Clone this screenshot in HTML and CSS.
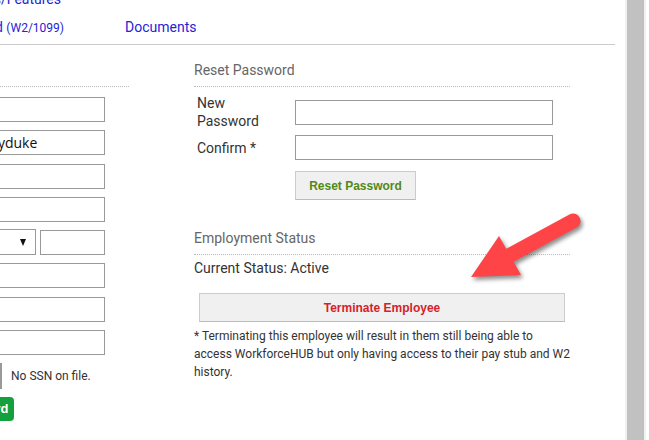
FILE: index.html
```html
<!DOCTYPE html>
<html lang="en">
<head>
    <meta charset="UTF-8">
    <meta name="viewport" content="width=device-width, initial-scale=1.0">
    <title>Employee Details</title>
    <link rel="stylesheet" href="styles.css">
</head>
<body>
    <div class="page">
        <div class="nav">
            <div class="nav-row nav-row-top">
                <a class="nav-link nav-first nav-features" href="#">Benefits/Features</a>
            </div>
            <div class="nav-row">
                <a class="nav-link nav-first" href="#">Year End <small>(W2/1099)</small></a>
                <a class="nav-link nav-docs" href="#">Documents</a>
            </div>
        </div>

        <div class="columns">
            <div class="col-left">
                <div class="section-title">Employee Info</div>
                <div class="info-rows">
                    <div class="info-row"><label>First Name</label><input type="text"></div>
                    <div class="info-row"><label>Username</label><input type="text" class="username" value="jmoodyduke"></div>
                    <div class="info-row"><label>Last Name</label><input type="text"></div>
                    <div class="info-row"><label>Address</label><input type="text"></div>
                    <div class="info-row">
                        <label>State / Zip</label>
                        <div class="field-split">
                            <div class="select-box"><span class="select-caret"></span></div>
                            <input type="text" class="zip">
                        </div>
                    </div>
                    <div class="info-row"><label>Phone</label><input type="text"></div>
                    <div class="info-row"><label>Email</label><input type="text"></div>
                    <div class="info-row"><label>Birth Date</label><input type="text"></div>
                    <div class="info-row">
                        <label>SSN</label>
                        <div class="ssn">
                            <div class="ssn-box"></div>
                            <span class="ssn-text">No SSN on file.</span>
                        </div>
                    </div>
                </div>
                <div class="save-row">
                    <button class="btn-save">Save Record</button>
                </div>
            </div>

            <div class="col-right">
                <div class="section-title">Reset Password</div>
                <div class="pw-form">
                    <label class="pw-label">New Password</label>
                    <input type="password">
                    <label class="pw-label">Confirm *</label>
                    <input type="password">
                </div>
                <button class="btn-grey btn-reset">Reset Password</button>

                <div class="section-title section-status">Employment Status</div>
                <div class="status">Current Status: Active</div>
                <button class="btn-grey btn-terminate">Terminate Employee</button>
                <p class="note">* Terminating this employee will result in them still being able to<br>access WorkforceHUB but only having access to their pay stub and W2 history.</p>
            </div>
        </div>
    </div>

    <!-- callout arrow drawn over the page -->
    <svg class="arrow" width="649" height="440" viewBox="0 0 649 440">
        <g class="arrow-shape">
            <line x1="573" y1="221" x2="503" y2="259" stroke="#ff4447" stroke-width="15" stroke-linecap="round"/>
            <polygon points="499,236 471,277 521,275" fill="#ff4447"/>
        </g>
    </svg>

    <div class="scrollbar"><div class="scrollbar-thumb"></div></div>
</body>
</html>
```

FILE: styles.css
```css
body {
    font-family: 'Roboto', 'Liberation Sans', sans-serif;
    font-size: 14px;
    color: #333;
    margin: 0;
    overflow: hidden;
    background: #fff;
    position: relative;
    height: 440px;
}

.page {
    width: 615px;
}

/* top navigation */
.nav {
    border-bottom: 1px solid #ccc;
    padding-bottom: 7px;
}

.nav-row {
    display: flex;
    line-height: 18px;
    margin-top: 10px;
    white-space: nowrap;
}

.nav-row-top {
    margin-top: -10px;
}

.nav-link {
    color: #2424d6;
    text-decoration: none;
}

.nav-first {
    width: 264px;
    margin-left: -200px;
    text-align: right;
}

.nav-features {
    padding-right: 3px;
    box-sizing: border-box;
}

.nav-link small {
    font-size: 12px;
}

.nav-docs {
    margin-left: 61px;
}

/* columns */
.columns {
    display: flex;
    margin-left: -131px;
}

.col-left {
    width: 260px;
}

.col-right {
    width: 376px;
    margin-left: 65px;
}

.section-title {
    margin-top: 15px;
    line-height: 20px;
    padding-bottom: 6px;
    border-bottom: 1px dotted #bbb;
    color: #666;
}

input {
    height: 25px;
    box-sizing: border-box;
    border: 1px solid #999;
    padding: 2px 4px;
    font-family: 'Open Sans', 'DejaVu Sans', sans-serif;
    font-size: 14px;
    color: #111;
    margin: 0;
    background: #fff;
}

/* left column rows */
.info-rows {
    margin-top: 10px;
}

.info-row {
    display: grid;
    grid-template-columns: 86px 150px;
    height: 25px;
    margin-bottom: 8.3px;
    align-items: center;
}

.info-row label {
    color: #333;
}

.info-row input {
    width: 150px;
}

.info-row .username {
    padding-left: 0;
}

.field-split {
    display: flex;
    gap: 4px;
}

.select-box {
    flex: 1;
    height: 26px;
    margin-top: -1px;
    box-sizing: border-box;
    border: 1px solid #999;
    display: flex;
    align-items: center;
    justify-content: flex-end;
    padding-right: 9px;
}

.select-caret {
    width: 0;
    height: 0;
    border-left: 3.5px solid transparent;
    border-right: 3.5px solid transparent;
    border-top: 7px solid #111;
}

.field-split .zip {
    width: 65px;
}

.ssn {
    display: flex;
    align-items: center;
}

.ssn-box {
    width: 47px;
    height: 26px;
    box-sizing: border-box;
    border: 1px solid #999;
    border-right-width: 2px;
    background: #fafafa;
}

.ssn-text {
    margin-left: 9px;
    font-size: 12px;
}

.save-row {
    display: flex;
    justify-content: flex-end;
    width: 144.5px;
    margin-top: 8px;
}

.btn-save {
    height: 24px;
    padding: 0 5px 0 8px;
    border: none;
    border-radius: 4px;
    background-color: #14a03c;
    color: #fff;
    font-family: 'Liberation Sans', sans-serif;
    font-weight: bold;
    font-size: 13px;
}

/* right column */
.pw-form {
    display: grid;
    grid-template-columns: 98px 258px;
    row-gap: 5px;
    margin-top: 7px;
    padding-left: 3px;
    align-items: center;
}

.pw-label {
    width: 70px;
    line-height: 18px;
    color: #333;
}

.pw-form input {
    width: 258px;
}

.btn-grey {
    display: block;
    height: 29px;
    box-sizing: border-box;
    background-color: #f0f0f0;
    border: 1px solid #ccc;
    border-bottom-color: #bbb;
    font-family: 'Liberation Sans', sans-serif;
    font-weight: bold;
    font-size: 12px;
    cursor: pointer;
}

.btn-reset {
    margin: 11px 0 0 101px;
    width: 121px;
    color: #4f8a16;
}

.section-status {
    margin-top: 28px;
}

.status {
    margin-top: 3px;
    line-height: 20px;
}

.btn-terminate {
    margin: 15px 0 0 5px;
    width: 366px;
    color: #d3222a;
}

.note {
    margin: 5px 0 0;
    width: 380px;
    font-size: 12px;
    line-height: 18px;
    color: #333;
}

/* overlays */
.arrow {
    position: absolute;
    top: 0;
    left: 0;
    pointer-events: none;
}

.arrow-shape {
    filter: drop-shadow(2px 3px 2px rgba(0, 0, 0, 0.45));
}

.scrollbar {
    position: fixed;
    top: 0;
    bottom: 0;
    left: 625px;
    width: 21px;
    background-color: #f1f1f1;
}

.scrollbar-thumb {
    margin: 0 2px;
    height: 100%;
    background-color: #c1c1c1;
}
```
